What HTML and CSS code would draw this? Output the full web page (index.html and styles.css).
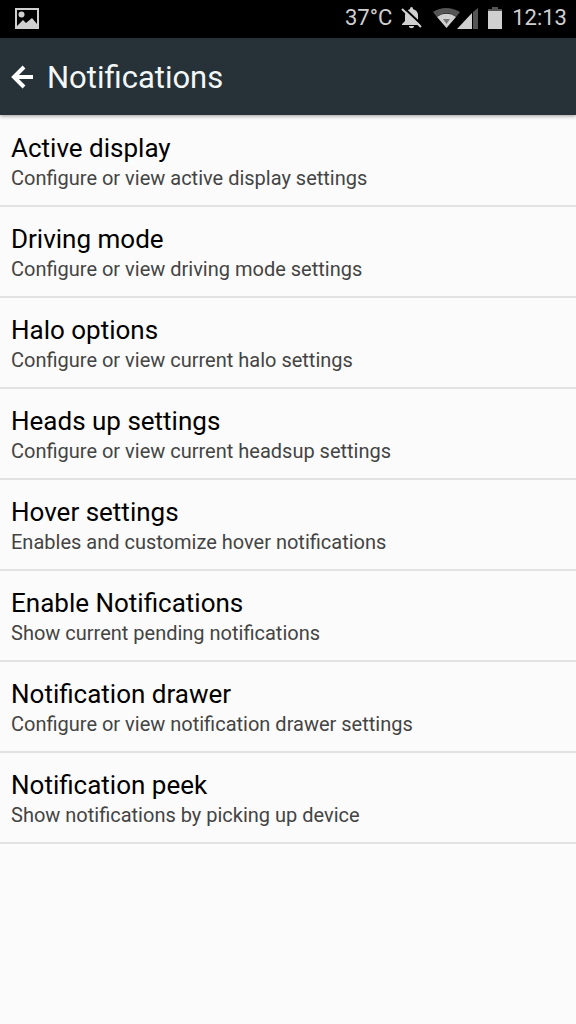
FILE: index.html
```
<!DOCTYPE html>
<html lang="en">
<head>
  <meta charset="utf-8">
  <meta name="viewport" content="width=device-width, initial-scale=1">
  <title>Notifications</title>
  <link rel="stylesheet" href="styles.css">
</head>
<body>
  <div class="statusbar">
    <svg class="icon-picture" width="24" height="22" viewBox="0 0 24 22">
      <path fill="#d0d0d0" fill-rule="evenodd" d="M0 1h24v21H0zM2 3v17h20V3z"/>
      <circle cx="6.500" cy="7.500" r="3" fill="#d0d0d0"/>
      <path fill="#d0d0d0" d="M2 19l6-6 3 3 6-5 5 6v3H2z"/>
    </svg>
    <div class="status-right">
      <span class="temp">37°C</span>
      <svg class="icon-bell" width="22" height="24" viewBox="0 0 22 24">
        <path fill="#d0d0d0" d="M1 19v-1l3-3V9c0-3 2-5 5-6V2.500a1.500 1.500 0 0 1 3 0V3c3 1 5 3 5 6v6l3 3v1z"/>
        <path fill="#d0d0d0" d="M8 20h5c0 3-5 3-5 0z"/>
        <path stroke="#000" stroke-width="2" d="M3 2l19 18"/>
        <path stroke="#d0d0d0" stroke-width="2" d="M1 3l19 18"/>
      </svg>
      <svg class="icon-signal" width="46" height="22" viewBox="0 0 46 22">
        <path fill="#555" d="M0 5C8-.5 18-.5 27 5l-4 5C17 5 10 5 4 10z"/>
        <path fill="#d0d0d0" d="M4 10C9 5.500 18 5.500 23 10L13.500 21z"/>
        <path fill="#777" d="M10 12h7l-3.500 5z"/>
        <path fill="#d0d0d0" d="M24 22L39 6v16z"/>
        <path fill="#555" d="M40 5l5-4v21h-5z"/>
      </svg>
      <svg class="icon-battery" width="14" height="22" viewBox="0 0 14 22">
        <path fill="#555" d="M4 0h6v2h4v2H0V2h4z"/>
        <path fill="#d0d0d0" d="M0 4h14v18H0z"/>
      </svg>
      <span class="clock">12:13</span>
    </div>
  </div>

  <header class="toolbar">
    <button class="back" type="button" aria-label="Back">
      <svg width="23" height="24" viewBox="0 0 23 24">
        <path fill="none" stroke="#fff" stroke-width="4" d="M13 2L3 12l10 10M3 12h19"/>
      </svg>
    </button>
    <h1>Notifications</h1>
  </header>

  <main class="list">
    <a class="item" href="#active-display">
      <span class="title">Active display</span>
      <span class="summary">Configure or view active display settings</span>
    </a>
    <a class="item" href="#driving-mode">
      <span class="title">Driving mode</span>
      <span class="summary">Configure or view driving mode settings</span>
    </a>
    <a class="item" href="#halo">
      <span class="title">Halo options</span>
      <span class="summary">Configure or view current halo settings</span>
    </a>
    <a class="item" href="#heads-up">
      <span class="title">Heads up settings</span>
      <span class="summary">Configure or view current headsup settings</span>
    </a>
    <a class="item" href="#hover">
      <span class="title">Hover settings</span>
      <span class="summary">Enables and customize hover notifications</span>
    </a>
    <a class="item" href="#enable">
      <span class="title">Enable Notifications</span>
      <span class="summary">Show current pending notifications</span>
    </a>
    <a class="item" href="#drawer">
      <span class="title">Notification drawer</span>
      <span class="summary">Configure or view notification drawer settings</span>
    </a>
    <a class="item" href="#peek">
      <span class="title">Notification peek</span>
      <span class="summary">Show notifications by picking up device</span>
    </a>
  </main>
</body>
</html>
```
FILE: styles.css
```
body {
  margin: 0;
  background-color: #fbfbfb;
  font-family: Roboto, sans-serif;
}

/* status bar */
.statusbar {
  display: flex;
  align-items: center;
  justify-content: space-between;
  height: 36px;
  padding: 0 9px 2px 15px;
  background-color: #000;
  color: #d0d0d0;
  font-size: 22px;
  line-height: 36px;
}

.status-right {
  display: flex;
  align-items: center;
}

.icon-picture,
.icon-signal,
.icon-battery {
  display: block;
}

.icon-bell {
  margin: 0 10px 0 9px;
}

.icon-battery {
  margin: 0 10px 0 9px;
}

/* toolbar */
.toolbar {
  display: flex;
  align-items: center;
  height: 77px;
  padding: 0 11px;
  background-color: #263238;
  box-shadow: 0 1px 4px rgba(0, 0, 0, 0.4);
}

.back {
  display: flex;
  margin: 0 13px 0 0;
  padding: 0;
  border: none;
  background: none;
  cursor: pointer;
}

h1 {
  margin: 0;
  padding-top: 2px;
  color: #f3f7f8;
  font-size: 31px;
  font-weight: 400;
  line-height: 40px;
}

/* settings list */
.list {
  padding-top: 1px;
}

.item {
  display: block;
  padding: 16px 11px 12px;
  border-bottom: 2px solid #e2e2e2;
  color: #000;
  text-decoration: none;
}

.title,
.summary {
  display: block;
}

.title {
  font-size: 26px;
  line-height: 32px;
}

.summary {
  color: #444;
  font-size: 20px;
  line-height: 29px;
}
```
